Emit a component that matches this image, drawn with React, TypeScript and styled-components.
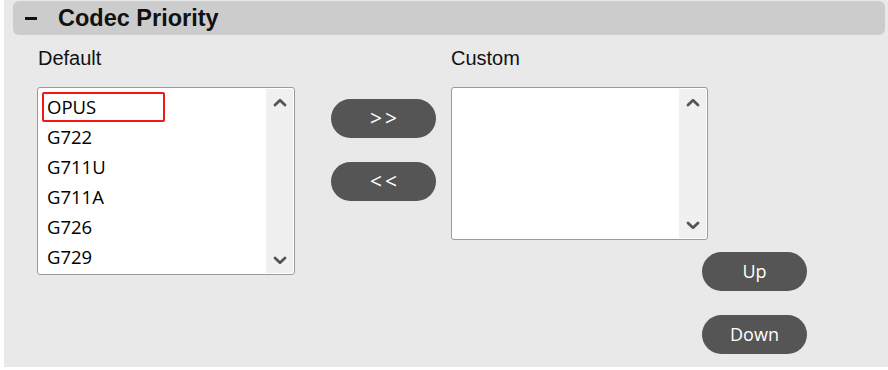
import React from 'react';
import styled, { createGlobalStyle } from 'styled-components';

const GlobalStyle = createGlobalStyle`
  html, body {
    margin: 0;
    padding: 0;
    background: #ffffff;
  }
  body {
    font-family: "Liberation Sans", Arial, sans-serif;
  }
`;

const Panel = styled.div`
  margin-left: 4px;
  width: 884px;
  height: 367px;
  padding-top: 1px;
  box-sizing: border-box;
  background-color: #e9e9e9;
`;

const Header = styled.div`
  display: flex;
  align-items: center;
  height: 34px;
  margin: 0 3px 0 9px;
  border-radius: 6px;
  background-color: #cccccc;
`;

const Toggle = styled.span`
  display: block;
  width: 12px;
  height: 3px;
  margin-left: 12px;
  background-color: #111111;
`;

const Title = styled.h2`
  margin: 0 0 0 21px;
  font-family: "Liberation Sans", Arial, sans-serif;
  font-size: 23.5px;
  font-weight: 700;
  line-height: 34px;
  color: #111111;
`;

const Body = styled.div`
  display: flex;
  align-items: flex-start;
  padding-left: 33px;
`;

const Column = styled.div`
  display: flex;
  flex-direction: column;
`;

const Label = styled.div<{ indent?: number }>`
  margin: 12px 0 18px ${p => p.indent ?? 0}px;
  font-size: 20px;
  line-height: 22px;
  color: #111111;
`;

const ListBox = styled.div<{ width: number; height: number }>`
  display: flex;
  width: ${p => p.width}px;
  height: ${p => p.height}px;
  box-sizing: border-box;
  border: 1px solid #9a9aa2;
  border-radius: 3px;
  background-color: #ffffff;
`;

const Options = styled.ul`
  flex: 1;
  margin: 0;
  padding: 4px 0 0 4px;
  list-style: none;
`;

const Option = styled.li<{ selected?: boolean }>`
  width: 123px;
  height: 30px;
  box-sizing: border-box;
  padding-left: 3px;
  border: 2px solid ${p => (p.selected ? '#f01818' : 'transparent')};
  border-radius: 2px;
  font-family: "Open Sans", "Segoe UI", sans-serif;
  font-size: 18.5px;
  line-height: 26px;
  color: #000000;
`;

const Track = styled.div`
  display: flex;
  flex-direction: column;
  justify-content: space-between;
  align-items: center;
  width: 27px;
  margin: 1px 1px 1px 0;
  padding: 9px 0 8px;
  box-sizing: border-box;
  background-color: #f0f0f0;
`;

const Transfer = styled.div`
  display: flex;
  flex-direction: column;
  gap: 24px;
  margin: 64px 15px 0 36px;
`;

const Pill = styled.button<{ arrows?: boolean }>`
  width: 105px;
  height: 39px;
  padding: 0;
  border: none;
  border-radius: 20px;
  background-color: #555555;
  color: #ffffff;
  font-family: "Open Sans", "Segoe UI", sans-serif;
  font-size: ${p => (p.arrows ? '21px' : '18px')};
  letter-spacing: ${p => (p.arrows ? '3px' : '0')};
  text-indent: ${p => (p.arrows ? '3px' : '0')};
  line-height: 39px;
  cursor: pointer;
`;

const Order = styled.div`
  display: flex;
  flex-direction: column;
  gap: 24px;
  margin: 12px 0 0 251px;
`;

const Chevron: React.FC<{ up?: boolean }> = ({ up }) => (
  <svg width="14" height="9" viewBox="0 0 14 9">
    <polyline
      points={up ? '2,7 7,2.2 12,7' : '2,2 7,6.8 12,2'}
      fill="none"
      stroke="#555555"
      strokeWidth="2.8"
      strokeLinecap="round"
      strokeLinejoin="round"
    />
  </svg>
);

const Scroller: React.FC = () => (
  <Track>
    <Chevron up />
    <Chevron />
  </Track>
);

const codecs = ['OPUS', 'G722', 'G711U', 'G711A', 'G726', 'G729'];

const App: React.FC = () => (
  <>
    <GlobalStyle />
    <Panel>
      <Header>
        <Toggle />
        <Title>Codec Priority</Title>
      </Header>
      <Body>
        <Column>
          <Label indent={1}>Default</Label>
          <ListBox width={258} height={188}>
            <Options>
              {codecs.map((c, i) => (
                <Option key={c} selected={i === 0}>
                  {c}
                </Option>
              ))}
            </Options>
            <Scroller />
          </ListBox>
        </Column>
        <Transfer>
          <Pill arrows>&gt;&gt;</Pill>
          <Pill arrows>&lt;&lt;</Pill>
        </Transfer>
        <Column>
          <Label>Custom</Label>
          <ListBox width={257} height={153}>
            <Options />
            <Scroller />
          </ListBox>
          <Order>
            <Pill>Up</Pill>
            <Pill>Down</Pill>
          </Order>
        </Column>
      </Body>
    </Panel>
  </>
);

export default App;
